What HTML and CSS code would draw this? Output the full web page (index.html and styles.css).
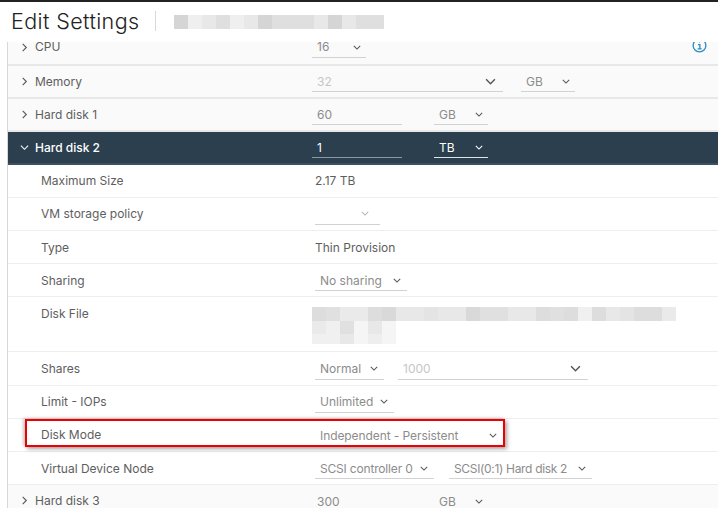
FILE: index.html
```html
<!DOCTYPE html>
<html lang="en">
<head>
<meta charset="utf-8">
<title>Edit Settings</title>
<link rel="stylesheet" href="styles.css">
</head>
<body>
<div class="topbar"></div>
<header class="head">
  <h1 class="title">Edit Settings</h1>
  <div class="sep"></div>
  <div class="mask mask-title">
    <i class="s3"></i><i class="s0"></i><i class="s1"></i><i class="s2"></i><i class="s0"></i><i class="s1"></i><i class="s3"></i><i class="s2"></i><i class="s2"></i><i class="s2"></i><i class="s1"></i><i class="s3"></i><i class="s1"></i><i class="s2"></i><i class="s2"></i>
  </div>
</header>
<main class="panel">
  <div class="row head-row h-cpu">
    <svg class="chev" viewBox="0 0 10 10"><path d="M3 1l4 4-4 4"/></svg><span class="label">CPU</span>
    <div class="val v-head"><div class="sel w-cpu"><span class="dim">16</span><svg class="dn" viewBox="0 0 10 6"><path d="M1 1l4 4 4-4"/></svg></div></div>
    <svg class="info" viewBox="0 0 16 16"><circle cx="8" cy="8" r="6.8"/><path d="M6.4 7h2v4.4M6 11.6h4.2M7.6 4.2h1"/></svg>
  </div>
  <div class="row head-row">
    <svg class="chev" viewBox="0 0 10 10"><path d="M3 1l4 4-4 4"/></svg><span class="label">Memory</span>
    <div class="val v-head"><div class="sel w-mem big-end"><span class="faint">32</span><svg class="dn big" viewBox="0 0 10 6"><path d="M1 1l4 4 4-4"/></svg></div><div class="sel w-gb1"><span class="dim">GB</span><svg class="dn" viewBox="0 0 10 6"><path d="M1 1l4 4 4-4"/></svg></div></div>
  </div>
  <div class="row head-row">
    <svg class="chev" viewBox="0 0 10 10"><path d="M3 1l4 4-4 4"/></svg><span class="label">Hard disk 1</span>
    <div class="val v-head"><div class="sel w-num"><span class="dim">60</span></div><div class="sel w-gb"><span class="dim">GB</span><svg class="dn" viewBox="0 0 10 6"><path d="M1 1l4 4 4-4"/></svg></div></div>
  </div>
  <div class="row head-row active">
    <svg class="chev" viewBox="0 0 10 10"><path d="M1 3l4 4 4-4"/></svg><span class="label">Hard disk 2</span>
    <div class="val v-head"><div class="sel w-num"><span>1</span></div><div class="sel w-gb"><span>TB</span><svg class="dn" viewBox="0 0 10 6"><path d="M1 1l4 4 4-4"/></svg></div></div>
  </div>
  <div class="row sub"><span class="label">Maximum Size</span><div class="val"><span>2.17 TB</span></div></div>
  <div class="row sub"><span class="label">VM storage policy</span><div class="val"><div class="sel w-policy"><span></span><svg class="dn light" viewBox="0 0 10 6"><path d="M1 1l4 4 4-4"/></svg></div></div></div>
  <div class="row sub"><span class="label">Type</span><div class="val"><span>Thin Provision</span></div></div>
  <div class="row sub"><span class="label">Sharing</span><div class="val"><div class="sel pad w-share"><span class="dim">No sharing</span><svg class="dn" viewBox="0 0 10 6"><path d="M1 1l4 4 4-4"/></svg></div></div></div>
  <div class="row sub file"><span class="label">Disk File</span>
    <div class="filemask">
      <div class="mask mask-file">
        <i class="c-dd"></i><i class="c-e0"></i><i class="c-ea"></i><i class="c-ea"></i><i class="c-dd"></i><i class="c-d9"></i><i class="c-e8"></i><i class="c-e8"></i><i class="c-e4"></i><i class="c-e8"></i><i class="c-e8"></i><i class="c-d9"></i><i class="c-e0"></i><i class="c-e0"></i><i class="c-e8"></i><i class="c-e8"></i><i class="c-dd"></i><i class="c-e0"></i><i class="c-dd"></i><i class="c-ef"></i><i class="c-dd"></i><i class="c-e8"></i><i class="c-e4"></i><i class="c-dd"></i><i class="c-dd"></i><i class="c-ea"></i>
      </div>
      <div class="mask mask-file2">
        <i class="c-ea"></i><i class="c-ef"></i><i class="c-e0"></i><i class="c-f5"></i><i class="c-e8"></i><i class="c-f5"></i>
      </div>
      <div class="mask mask-file3">
        <i class="c-ef"></i><i class="c-ef"></i><i class="c-e8"></i><i class="c-f5"></i><i class="c-ee"></i><i class="c-f5"></i>
      </div>
    </div>
  </div>
  <div class="row sub"><span class="label">Shares</span><div class="val"><div class="sel pad w-normal"><span class="dim">Normal</span><svg class="dn" viewBox="0 0 10 6"><path d="M1 1l4 4 4-4"/></svg></div><div class="sel pad w-1000 big-end"><span class="faint">1000</span><svg class="dn big" viewBox="0 0 10 6"><path d="M1 1l4 4 4-4"/></svg></div></div></div>
  <div class="row sub"><span class="label">Limit - IOPs</span><div class="val"><div class="sel pad w-limit"><span class="dim">Unlimited</span><svg class="dn" viewBox="0 0 10 6"><path d="M1 1l4 4 4-4"/></svg></div></div></div>
  <div class="row sub"><span class="label">Disk Mode</span><div class="val"><div class="sel pad w-mode plain"><span class="dim t-mode">Independent - Persistent</span><svg class="dn" viewBox="0 0 10 6"><path d="M1 1l4 4 4-4"/></svg></div></div></div>
  <div class="row sub"><span class="label">Virtual Device Node</span><div class="val"><div class="sel pad w-ctrl"><span class="dim t-ctrl">SCSI controller 0</span><svg class="dn" viewBox="0 0 10 6"><path d="M1 1l4 4 4-4"/></svg></div><div class="sel pad w-node"><span class="dim t-node">SCSI(0:1) Hard disk 2</span><svg class="dn" viewBox="0 0 10 6"><path d="M1 1l4 4 4-4"/></svg></div></div></div>
  <div class="row head-row last">
    <svg class="chev" viewBox="0 0 10 10"><path d="M3 1l4 4-4 4"/></svg><span class="label">Hard disk 3</span>
    <div class="val v-head"><div class="sel w-num plain"><span class="dim">300</span></div><div class="sel w-gb plain"><span class="dim">GB</span><svg class="dn" viewBox="0 0 10 6"><path d="M1 1l4 4 4-4"/></svg></div></div>
  </div>
  <div class="callout"></div>
</main>
</body>
</html>
```
FILE: styles.css
```css
* { box-sizing: border-box; }
html, body { margin: 0; padding: 0; }
body { width: 718px; height: 510px; background: #fff; overflow: hidden; font-family: Inter, "Liberation Sans", sans-serif; font-size: 12px; color: #5e5e5e; }
.topbar { height: 2px; background: #232323; }
.head { position: relative; z-index: 1; height: 40px; display: flex; align-items: center; padding-left: 11px; background: #fff; }
.title { margin: -2px 0 0; font-size: 21.5px; font-weight: 300; letter-spacing: .4px; color: #222; width: 144px; white-space: nowrap; }
.sep { width: 1px; height: 20px; margin-top: -2px; background: #d8d8d8; margin-right: 18px; }
.mask { display: flex; }
.mask i { display: block; width: 14px; height: 14px; }
.mask-title { margin-top: -1px; }
.s0 { background: #efefef; } .s1 { background: #e8e8e8; } .s2 { background: #dfdfdf; } .s3 { background: #d5d5d5; }
.c-d9 { background: #d9d9d9; } .c-dd { background: #dddddd; } .c-e0 { background: #e0e0e0; } .c-e4 { background: #e4e4e4; } .c-e8 { background: #e8e8e8; } .c-ea { background: #eaeaea; } .c-ee { background: #eeeeee; } .c-ef { background: #f0f0f0; } .c-f5 { background: #f5f5f5; }
.panel { position: relative; margin-left: 7px; border-left: 1px solid #d8d8d8; height: 466px; overflow: hidden; }
.row { display: flex; align-items: center; height: 33.2px; border-bottom: 1px solid #eee; }
.head-row { background: #fafafa; border-bottom: 2px solid #e8e8e8; padding-left: 12px; }
.h-cpu { margin-top: -9.7px; padding-bottom: 1px; }
.h-cpu .label, .h-cpu .dim { line-height: 12px; }
.chev { width: 9px; height: 11px; margin-right: 6px; flex: none; fill: none; stroke: #555; stroke-width: 1.2; }
.label { white-space: nowrap; }
.head-row .label { width: 277px; }
.sub .label { width: 307px; padding-left: 33px; flex: none; }
.sub { background: #fff; }
.val { display: flex; align-items: center; flex: none; }
.sel { display: flex; align-items: center; justify-content: space-between; height: 21px; margin-top: 1px; border-bottom: 1px solid #d2d2d2; padding: 0 5px; }
.pad { padding: 0 6px 0 5px; }
.big-end { padding-right: 7px; }
.dim { color: #8c8c8c; }
.faint { color: #c6c6c6; }
.t-mode { letter-spacing: -.08px; }
.t-ctrl { letter-spacing: -.18px; }
.t-node { letter-spacing: -.33px; }
.dn { width: 8px; height: 5px; fill: none; stroke: #555; stroke-width: 1.3; flex: none; }
.dn.big { width: 11px; height: 7px; }
.dn.light { stroke: #b5b5b5; }
.w-cpu { width: 54px; }
.w-mem { width: 191px; margin-right: 18px; }
.w-gb1 { width: 54px; }
.w-num { width: 90px; margin-right: 32px; }
.w-gb { width: 54px; }
.w-policy { width: 65px; padding-right: 11px; }
.w-share { width: 92px; }
.w-normal { width: 69px; margin-right: 14px; }
.w-1000 { width: 190px; }
.w-limit { width: 79px; }
.w-mode { width: 188px; }
.w-ctrl { width: 119px; margin-right: 15px; }
.w-node { width: 143px; }
.plain { border-bottom: 0; }
.active { height: 32.8px; background: #2b3f4e; border-bottom: 2px solid #3c5060; color: #fff; font-weight: 500; }
.active .chev { stroke: #fff; }
.active .sel { border-bottom-color: #8c98a1; font-weight: 400; }
.active .w-gb { border-bottom-color: #dfe3e6; }
.active .dn { stroke: #fff; }
.info { position: absolute; top: -4px; left: 684px; width: 15px; height: 15px; fill: none; stroke: #2a8cc0; stroke-width: 1.4; }
.file { height: 55px; align-items: flex-start; padding-top: 9px; }
.filemask { margin-left: -3px; margin-top: 1px; }
.mask-file2 i { height: 13px; }
.mask-file3 i { height: 10px; }
.last { height: 31px; border-bottom: 0; }
.callout { position: absolute; left: 17px; top: 377px; width: 480px; height: 28px; border: 2px solid #ee0000; box-shadow: 2px 2px 4px rgba(0,0,0,.35), -2px -1px 3px rgba(0,0,0,.2); }
```
